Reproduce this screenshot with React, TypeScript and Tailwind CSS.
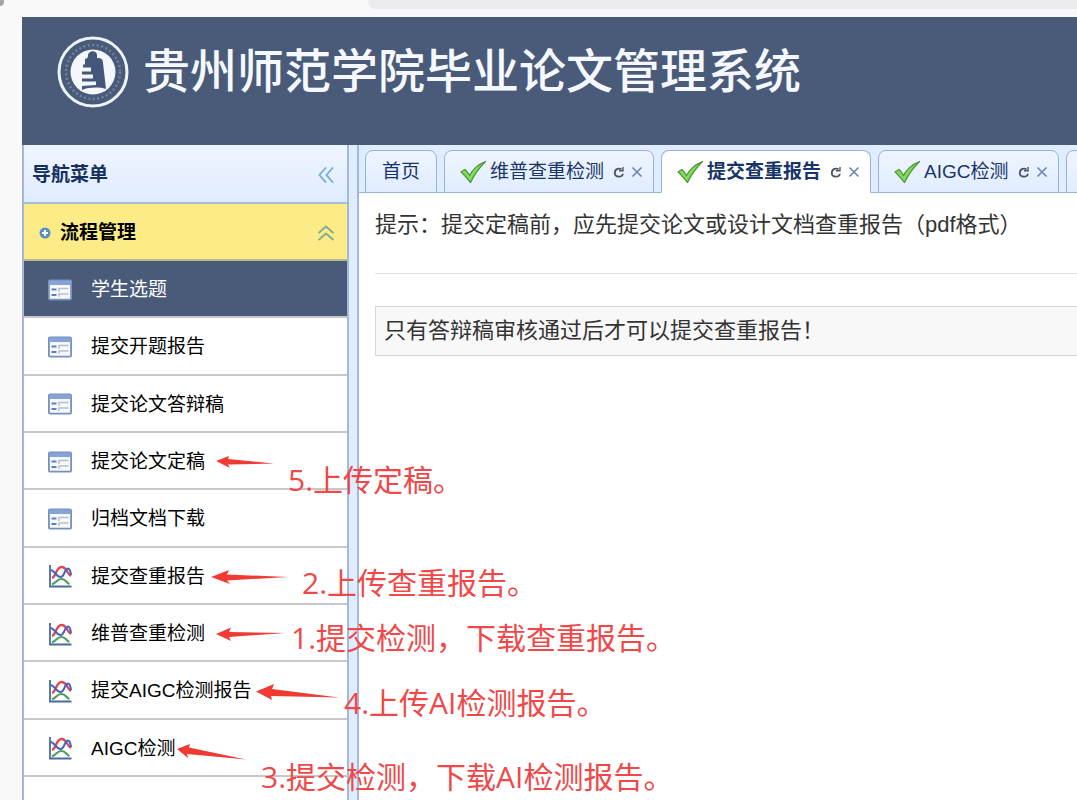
import { useState } from 'react';

const menuItems = [
  { id: 'topic', label: '学生选题', icon: 'form' },
  { id: 'proposal', label: '提交开题报告', icon: 'form' },
  { id: 'defense', label: '提交论文答辩稿', icon: 'form' },
  { id: 'final', label: '提交论文定稿', icon: 'form' },
  { id: 'archive', label: '归档文档下载', icon: 'form' },
  { id: 'report', label: '提交查重报告', icon: 'chart' },
  { id: 'vip', label: '维普查重检测', icon: 'chart' },
  { id: 'aigc-report', label: '提交AIGC检测报告', icon: 'chart' },
  { id: 'aigc', label: 'AIGC检测', icon: 'chart' },
];

const tabs = [
  { id: 'vip', label: '维普查重检测' },
  { id: 'report', label: '提交查重报告' },
  { id: 'aigc', label: 'AIGC检测' },
];

const arrows = [
  'M216 461 L229 456 L228 459 L274 463.5 L228 464.5 L230 468 Z',
  'M211 577 L229 570 L227 574.5 L288 577 L227 580.5 L230 584 Z',
  'M216 634 L231 627.5 L229 632 L285 633 L229 637 L231 641 Z',
  'M256 691.5 L274 684 L272 689 L339 697.5 L271 696 L272 700 Z',
  'M177 749 L190 744 L189 747.5 L246 759.5 L187 754 L188 758 Z',
];

function Logo() {
  return (
    <svg viewBox="0 0 72 72" className="h-[72px] w-[72px] shrink-0" aria-hidden="true">
      <circle cx="36" cy="36" r="34" fill="none" stroke="#eef3fb" strokeWidth="3" />
      <circle cx="36" cy="36" r="27" fill="none" stroke="#9aa8c2" strokeWidth="2.5" strokeDasharray="2 2.5" opacity="0.5" />
      <circle cx="36" cy="36" r="22.5" fill="#f4f7fd" />
      <path
        d="M31 20 C31 14 40 14 40 19 L40 22 C45 22 46 24 46 27 L49 53 C42 51 32 51 25 54 L25 50 L39 49 L39 45.5 L25 45.5 L25 42.5 L36 42.5 L36 38.5 L25 38.5 L25 35.5 L34 35.5 L34 31.5 L26 31.5 L26 28.5 L28 28.5 L28 23 C30 22 31 22 31 20 Z"
        fill="#44577a"
      />
    </svg>
  );
}

function FormIcon() {
  return (
    <svg viewBox="0 0 24 22" className="h-[22px] w-6 shrink-0" aria-hidden="true">
      <rect x="0.9" y="1.4" width="22.2" height="19.2" rx="1" fill="#f5f8fd" stroke="#7790bd" strokeWidth="1.8" />
      <path d="M1 1.5 H23 V6 H1 Z" fill="#86a3d6" />
      <path d="M3.5 10.5 H8.5 M3.5 16 H8.5" stroke="#5f7fb5" strokeWidth="2" />
      <path d="M11 13 V9.5 H20.5 M11 18 V15 H20.5" fill="none" stroke="#b9bfc6" strokeWidth="1.5" />
    </svg>
  );
}

function ChartIcon() {
  return (
    <svg viewBox="0 0 24 24" className="h-6 w-6 shrink-0" fill="none" aria-hidden="true">
      <path d="M2 1 V22.5 H23.5" stroke="#4a6a9c" strokeWidth="1.8" />
      <path d="M4 20.5 C8 19 9 15 13.5 15 C18 15 18 19 21.5 20" stroke="#4f9c5c" strokeWidth="2.2" />
      <path d="M4 14 C8 13 8 3 13.5 3 C19 3 19 10 23 12" stroke="#e0474c" strokeWidth="2.3" />
      <path d="M3 6 C7 7 8 13 12.5 13 C17 13 16 5 20 4.5 C22 4.5 22.5 7 23 11" stroke="#4a63bd" strokeWidth="2.1" />
    </svg>
  );
}

function CheckIcon() {
  return (
    <svg viewBox="0 0 28 24" className="h-6 w-7 shrink-0" aria-hidden="true">
      <path
        d="M2 12 L6 9.5 C8 11 9 13 10.5 15.5 C14 9 19 4.5 26.5 1.5 C20 8 15 15 11.5 22.5 C8.5 19 5.5 15 2 12 Z"
        fill="#83dc55"
        stroke="#4f9440"
        strokeWidth="1.3"
        strokeLinejoin="round"
      />
    </svg>
  );
}

function RefreshIcon() {
  return (
    <svg viewBox="0 0 12 14" className="h-[14px] w-3" fill="none" stroke="#4c5563" strokeWidth="1.8" aria-hidden="true">
      <path d="M8.5 4.2 C6.5 3 1.8 3.5 1.8 8 C1.8 12.8 9.8 12.8 9.8 8.8" />
      <path d="M10 2 V5.8 H6" strokeWidth="1.4" />
    </svg>
  );
}

function CloseIcon() {
  return (
    <svg viewBox="0 0 12 12" className="h-3 w-3" stroke="#6a84ad" strokeWidth="1.6" aria-hidden="true">
      <path d="M1.5 1.5 L10.5 10.5 M10.5 1.5 L1.5 10.5" />
    </svg>
  );
}

function ChevronsLeft() {
  return (
    <svg viewBox="0 0 16 16" className="h-4 w-4" fill="none" stroke="#79afd6" strokeWidth="1.9" aria-hidden="true">
      <path d="M8 0.5 L1.5 8 L8 15.5 M15 0.5 L8.5 8 L15 15.5" />
    </svg>
  );
}

function ChevronsUp() {
  return (
    <svg viewBox="0 0 16 16" className="h-4 w-4" fill="none" stroke="#86a98f" strokeWidth="1.9" aria-hidden="true">
      <path d="M0.5 8 L8 1.5 L15.5 8 M0.5 15 L8 8.5 L15.5 15" />
    </svg>
  );
}

function PlusDot() {
  return (
    <svg viewBox="0 0 12 12" className="h-3 w-3 shrink-0" aria-hidden="true">
      <circle cx="6" cy="6" r="5.5" fill="#5a8fc4" />
      <path d="M6 3 V9 M3 6 H9" stroke="#ffffff" strokeWidth="2" />
    </svg>
  );
}

function Sidebar() {
  const [current, setCurrent] = useState('topic');

  return (
    <nav className="w-[327px] shrink-0 border-x-2 border-[#a3b9dc] bg-white" aria-label="导航菜单">
      <div className="flex h-[59px] items-center justify-between border-b-2 border-[#a9bdd4] bg-linear-to-b from-[#eff5ff] to-[#e0ecff] pt-[2px] pr-[13px] pl-2">
        <h2 className="text-[19px] leading-6 font-bold text-[#16305e]">导航菜单</h2>
        <button type="button" aria-label="收起">
          <ChevronsLeft />
        </button>
      </div>
      <button
        type="button"
        className="flex h-[57px] w-full items-center border-b-2 border-[#b9b88c] bg-[#fbec88] pt-[2px] pr-[13px] pl-[15px] text-left"
      >
        <PlusDot />
        <span className="ml-[9px] flex-1 text-[19px] leading-6 font-bold text-black">流程管理</span>
        <ChevronsUp />
      </button>
      <ul className="grid h-[516px] grid-rows-9">
        {menuItems.map((item) => (
          <li key={item.id} className="border-b-2 border-[#c6c8ca]">
            <a
              href={`#${item.id}`}
              onClick={() => setCurrent(item.id)}
              className={`flex h-full items-center gap-[19px] pt-[2px] pl-6 text-[19px] ${
                current === item.id ? 'bg-[#4a5b79] text-white' : 'text-black'
              }`}
            >
              {item.icon === 'form' ? <FormIcon /> : <ChartIcon />}
              <span className="pt-px leading-6">{item.label}</span>
            </a>
          </li>
        ))}
      </ul>
    </nav>
  );
}

function TabBar() {
  const [active, setActive] = useState('report');

  return (
    <div className="flex h-12 items-end gap-[7px] overflow-hidden bg-[#e0ecff] pl-[6px] shadow-[inset_0_-1px_0_#95b3dc]">
      <button
        type="button"
        className="h-[43px] shrink-0 rounded-t-lg border border-[#95b3dc] bg-linear-to-b from-[#eff5ff] to-[#e0ecff] px-4 pt-[2px] text-[19px] text-[#173568]"
      >
        首页
      </button>
      {tabs.map((tab) => (
        <div
          key={tab.id}
          className={`flex h-[43px] shrink-0 items-center rounded-t-lg border border-[#95b3dc] pr-[10px] pl-[14px] text-[#173568] ${
            active === tab.id ? 'border-b-white bg-white font-bold' : 'bg-linear-to-b from-[#eff5ff] to-[#e0ecff]'
          }`}
        >
          <button type="button" className="flex items-center gap-[3px] text-[19px]" onClick={() => setActive(tab.id)}>
            <CheckIcon />
            <span className="pt-[2px]">{tab.label}</span>
          </button>
          <button type="button" aria-label="刷新" className="ml-[9px]">
            <RefreshIcon />
          </button>
          <button type="button" aria-label="关闭" className="ml-[6px]">
            <CloseIcon />
          </button>
        </div>
      ))}
      <div className="h-[43px] w-24 shrink-0 rounded-t-lg border border-[#95b3dc] bg-linear-to-b from-[#eff5ff] to-[#e0ecff]" />
    </div>
  );
}

// Hand-drawn notes that lie over the whole window
function Annotations() {
  return (
    <div className="pointer-events-none absolute inset-0 overflow-hidden font-['Open_Sans','Noto_Sans_CJK_SC',sans-serif] text-[30px] leading-10 whitespace-nowrap text-[#f04848]">
      <svg className="absolute top-0 left-0 h-[800px] w-[400px]" fill="#f23a35" aria-hidden="true">
        {arrows.map((d) => (
          <path key={d} d={d} />
        ))}
      </svg>
      <p className="absolute top-[460px] left-[288px]">5.上传定稿。</p>
      <p className="absolute top-[563px] left-[302px]">2.上传查重报告。</p>
      <p className="absolute top-[618px] left-[291px]">1.提交检测，下载查重报告。</p>
      <p className="absolute top-[683px] left-[344px]">4.上传AI检测报告。</p>
      <p className="absolute top-[757px] left-[261px]">3.提交检测，下载AI检测报告。</p>
    </div>
  );
}

export default function App() {
  return (
    <div className="relative flex min-h-screen flex-col overflow-hidden bg-[#f9f9fa] font-['Liberation_Sans','Noto_Sans_CJK_SC',sans-serif]">
      <div className="flex h-[17px] items-start justify-between">
        <span className="h-[6px] w-1 rounded-br-full bg-[#a5a5a8]" />
        <span className="ml-[364px] h-[9px] flex-1 rounded-bl-lg bg-[#ebebed]" />
      </div>

      <div className="ml-[22px] flex flex-1 flex-col">
        <header className="flex h-32 items-start gap-[14px] bg-[#4a5b79] pt-[19px] pl-[35px]">
          <Logo />
          <h1 className="text-[47px] leading-[72px] font-medium whitespace-nowrap text-[#f5f8ff]">
            贵州师范学院毕业论文管理系统
          </h1>
        </header>

        <div className="flex flex-1 bg-[#e0ecff]">
          <Sidebar />
          <main className="ml-2 min-w-0 flex-1 border-l-2 border-[#a3b9dc] bg-white">
            <TabBar />
            <div className="pt-4 pl-4 text-[22px] text-[#333333]">
              <p className="leading-8 whitespace-nowrap">提示：提交定稿前，应先提交论文或设计文档查重报告（pdf格式）</p>
              <hr className="mt-8 border-[#e2e2e2]" />
              <p className="mt-8 border border-r-0 border-[#d3d6db] bg-[#f8f8f8] px-2 py-2 leading-8">
                只有答辩稿审核通过后才可以提交查重报告！
              </p>
            </div>
          </main>
        </div>
      </div>

      <Annotations />
    </div>
  );
}
